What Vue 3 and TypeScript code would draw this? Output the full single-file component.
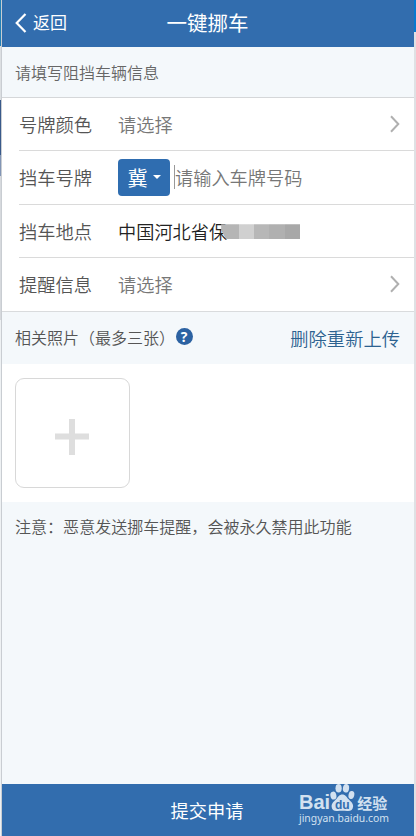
<script setup lang="ts">
interface Row {
  label: string
  kind: 'select' | 'plate' | 'place'
  text: string
}

const rows: Row[] = [
  { label: '号牌颜色', kind: 'select', text: '请选择' },
  { label: '挡车号牌', kind: 'plate', text: '请输入车牌号码' },
  { label: '挡车地点', kind: 'place', text: '中国河北省保' },
  { label: '提醒信息', kind: 'select', text: '请选择' },
]
</script>

<template>
  <div class="page">
    <div class="edge edge-left"></div>
    <main class="phone">
      <header class="bar">
        <div class="back">
          <svg width="12" height="20" viewBox="0 0 12 20"><path d="M10.5 1 1.7 10l8.8 9" /></svg>
          <span>返回</span>
        </div>
        <h1>一键挪车</h1>
      </header>

      <p class="intro">请填写阻挡车辆信息</p>

      <section class="form">
        <div v-for="row in rows" :key="row.label" class="row">
          <span class="label">{{ row.label }}</span>
          <template v-if="row.kind === 'select'">
            <span class="value muted">{{ row.text }}</span>
            <svg class="chevron" width="10" height="18" viewBox="0 0 10 18"><path d="M1 1.2 8.3 9 1 16.8" /></svg>
          </template>
          <template v-else-if="row.kind === 'plate'">
            <button class="province">冀<i class="caret"></i></button>
            <span class="input muted">{{ row.text }}</span>
          </template>
          <template v-else>
            <span class="value dark">{{ row.text }}</span>
            <span class="mask"></span>
          </template>
        </div>
      </section>

      <div class="photo-head">
        <span class="photo-title">相关照片（最多三张）</span>
        <span class="help">?</span>
        <a class="reset">删除重新上传</a>
      </div>

      <section class="photos">
        <div class="add">
          <svg width="34" height="36" viewBox="0 0 34 36"><path d="M14 0h6v14.500h14v6H20V36h-6V20.500H0v-6h14z" /></svg>
        </div>
      </section>

      <p class="note">注意：恶意发送挪车提醒，会被永久禁用此功能</p>

      <footer class="submit">提交申请</footer>
    </main>
    <div class="edge edge-right"></div>

    <div class="watermark">
      <div class="brand">
        <span class="bai">Bai</span>
        <svg class="paw" width="27" height="29" viewBox="0 0 27 29">
          <ellipse cx="4.400" cy="12.600" rx="3" ry="4" transform="rotate(-12 4.400 12.600)" />
          <ellipse cx="9.600" cy="5.200" rx="3.100" ry="4.300" />
          <ellipse cx="17" cy="5.200" rx="3.100" ry="4.300" transform="rotate(8 17 5.200)" />
          <ellipse cx="22.400" cy="12" rx="2.900" ry="4" transform="rotate(12 22.400 12)" />
          <path d="M13.300 11.500c3 0 4 2.300 6 4.500 2.200 2.400 5 4 4.800 7.500-.2 3.600-3 5-6 4.500-3.200-.5-6.500-.5-9.600 0-3 .5-5.800-1-5.900-4.500-.1-3.500 2.600-5.100 4.700-7.500 2-2.200 3-4.500 6-4.500z" />
          <text x="13.300" y="25.800">du</text>
        </svg>
        <span class="jy">经验</span>
      </div>
      <div class="site">jingyan.baidu.com</div>
    </div>
  </div>
</template>

<style>
body {
  overflow: hidden;
}
</style>

<style scoped>
.page {
  position: relative;
  display: grid;
  grid-template-columns: 2px 412px 2px;
  width: 416px;
  height: 836px;
  font-family: "Noto Sans CJK SC", sans-serif;
  font-weight: 350;
  background: #fff;
}
.edge-left {
  background: linear-gradient(#247fb5 0 46px, #dcdfe2 46px 100px, #39598a 100px 155px, #8295b5 155px 176px, #d6d9dd 176px 320px, #eef1f3 320px);
  border-right: 1px solid #c9cdd2;
}
.edge-right {
  background: linear-gradient(#0878cf 0 32px, #dfe1e4 32px);
}
.phone {
  display: grid;
  grid-template-rows: 47px 51px 214px 52px 138px 1fr 52px;
  background: #f4f8fb;
}
.bar {
  display: grid;
  grid-template-columns: 1fr auto 1fr;
  align-items: center;
  background: #326dae;
  color: #fff;
}
.back {
  display: flex;
  align-items: center;
  gap: 6px;
  padding-left: 13px;
  padding-bottom: 4px;
  font-size: 17px;
  font-weight: 400;
}
.back svg {
  margin-top: 2px;
}
.back path {
  fill: none;
  stroke: #fff;
  stroke-width: 2.200;
}
h1 {
  margin: 0;
  padding: 0 1px 4px 0;
  font-size: 20.500px;
  font-weight: 400;
}
.intro {
  display: flex;
  align-items: center;
  margin: 0;
  padding: 0 13px 1px;
  border-bottom: 1px solid #d5d7d9;
  font-size: 16px;
  color: #666;
}
.form {
  display: grid;
  grid-template-rows: repeat(4, 1fr);
  background: #fff;
  border-bottom: 1px solid #d9dbdd;
}
.row {
  display: flex;
  align-items: center;
  margin-left: 17px;
  border-bottom: 1px solid #dadada;
  font-size: 18px;
  white-space: nowrap;
}
.row:last-child {
  border-bottom: 0;
}
.label {
  width: 99px;
  color: #555;
  font-size: 18.300px;
}
.muted {
  color: #777;
  font-size: 18.200px;
}
.dark {
  color: #222;
  font-size: 18.200px;
}
.chevron {
  margin-left: auto;
  margin-right: 14px;
}
.chevron path {
  fill: none;
  stroke: #b0b0b0;
  stroke-width: 2;
}
.province {
  display: flex;
  align-items: center;
  justify-content: center;
  gap: 5px;
  width: 52px;
  height: 37px;
  padding: 0;
  border: 0;
  border-radius: 4px;
  background: #2f6db0;
  color: #fff;
  font: 400 20px "Noto Sans CJK SC", sans-serif;
}
.caret {
  border: 4px solid transparent;
  border-top-color: #fff;
  border-bottom: 0;
}
.input {
  margin-left: 4px;
  border-left: 1px solid #999;
  line-height: 24px;
}
.mask {
  width: 79px;
  height: 15px;
  margin-left: -6px;
  margin-top: 2px;
  background: linear-gradient(90deg, #b5b5b5 0 18px, #d0d0d0 18px 33px, #b7b7b7 33px 48px, #b0b0b0 48px 64px, #a8a8a8 64px);
  clip-path: polygon(0 0, 100% 0, 100% 100%, 5px 100%, 0 40%);
}
.photo-head {
  display: flex;
  align-items: center;
  padding: 0 14px 3px 13px;
}
.photo-title {
  font-size: 16px;
  color: #555;
}
.help {
  display: flex;
  align-items: center;
  justify-content: center;
  width: 17px;
  height: 17px;
  margin-left: 0.5px;
  margin-top: -1px;
  border-radius: 50%;
  background: #2c62a2;
  color: #fff;
  font: 700 14px "Open Sans", sans-serif;
}
.reset {
  margin-left: auto;
  margin-top: 2px;
  font-size: 18.300px;
  color: #2c6290;
}
.photos {
  padding: 14px 13px;
  background: #fff;
}
.add {
  display: flex;
  align-items: center;
  justify-content: center;
  box-sizing: border-box;
  width: 114.500px;
  height: 110px;
  padding-top: 7px;
  border: 1px solid #d8d8d8;
  border-radius: 9px;
}
.add path {
  fill: #dedede;
}
.note {
  margin: 0;
  padding: 12px 13px 0;
  font-size: 16.050px;
  line-height: 24px;
  color: #555;
}
.submit {
  display: flex;
  align-items: center;
  justify-content: center;
  padding: 0 2px 1px 0;
  background: #326dae;
  color: #fff;
  font-size: 18.200px;
  font-weight: 400;
}
.watermark {
  position: absolute;
  left: 299px;
  top: 783px;
  color: #d2e1f0;
}
.brand {
  display: flex;
  align-items: flex-end;
  height: 29px;
}
.bai {
  font: 700 20px/19px "Liberation Sans", sans-serif;
}
.paw {
  margin-left: -1px;
  fill: #d2e1f0;
}
.paw text {
  fill: #326dae;
  font: 700 12px "Liberation Sans", sans-serif;
  text-anchor: middle;
}
.jy {
  margin-left: 1px;
  font-size: 15px;
  line-height: 18px;
  font-weight: 700;
}
.site {
  font: 400 10.400px/12px "Noto Sans", sans-serif;
}
</style>
